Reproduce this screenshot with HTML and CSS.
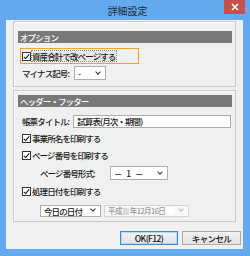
FILE: index.html
```html
<!DOCTYPE html>
<html lang="ja">
<head>
<meta charset="utf-8">
<link rel="stylesheet" href="styles.css">
</head>
<body>
<div class="window">
  <div class="titlebar">
    <span class="title">詳細設定</span>
    <span class="close"><svg width="8" height="8" viewBox="0 0 8 8"><path d="M1 1L7 7M7 1L1 7" stroke="#fff" stroke-width="1.7"/></svg></span>
  </div>
  <div class="client">
    <section class="panel p1">
      <div class="head">オプション</div>
      <label class="check focus"><span class="box on"></span><span class="ctext dotted">資産合計で改ページする</span></label>
      <div class="row r-minus">
        <span class="lbl">マイナス記号:</span>
        <span class="select s-minus"><span class="val">-</span><span class="chev"></span></span>
      </div>
    </section>
    <section class="panel p2">
      <div class="head">ヘッダー・フッター</div>
      <div class="row r-title">
        <span class="lbl">帳票タイトル:</span>
        <span class="input">試算表(月次・期間)</span>
      </div>
      <label class="check r-cb1"><span class="box on"></span><span class="ctext">事業所名を印刷する</span></label>
      <label class="check r-cb2"><span class="box on"></span><span class="ctext">ページ番号を印刷する</span></label>
      <div class="row r-fmt">
        <span class="lbl fmt-lbl">ページ番号形式:</span>
        <span class="select s-fmt"><span class="val">－&nbsp;&nbsp;1&nbsp;&nbsp;－</span><span class="chev"></span></span>
      </div>
      <label class="check r-cb3"><span class="box on"></span><span class="ctext">処理日付を印刷する</span></label>
      <div class="row r-date">
        <span class="select s-day"><span class="val">今日の日付</span><span class="chev"></span></span>
        <span class="select s-date dis"><span class="val">平成<span class="blot"></span>年12月16日</span><span class="blank"></span><span class="chev"></span></span>
      </div>
    </section>
    <div class="buttons">
      <button class="btn default">OK(F12)</button>
      <button class="btn">キャンセル</button>
    </div>
  </div>
</div>
</body>
</html>
```

FILE: styles.css
```css
* { box-sizing: border-box; }
html, body { margin: 0; padding: 0; }
body {
  width: 250px;
  height: 256px;
  overflow: hidden;
  font-family: "Noto Sans CJK JP", "Noto Sans", sans-serif;
  font-size: 8.5px;
  font-weight: 500;
  color: #1a1a1a;
}
.window {
  width: 250px;
  height: 256px;
  background: #62a9ee;
  padding: 0 7px 7px 6px;
  display: flex;
  flex-direction: column;
}
.titlebar {
  position: relative;
  height: 20px;
  flex: none;
  display: flex;
  align-items: center;
  justify-content: center;
}
.title {
  font-size: 10px;
  font-weight: 400;
  letter-spacing: -0.1px;
  color: #1d2a3a;
  margin-left: 6px;
  margin-top: 1px;
}
.close {
  position: absolute;
  top: 0;
  right: -2px;
  width: 21px;
  height: 14px;
  background: #c74f50;
  display: flex;
  align-items: center;
  justify-content: center;
}
.client {
  flex: 1;
  background: #f0f0f0;
  padding: 1px 7px 0 7px;
  display: flex;
  flex-direction: column;
}
.panel {
  border: 1px solid #c9c9c9;
  box-shadow: inset 1px 1px 0 #ffffff;
  display: flex;
  flex-direction: column;
  padding: 0 3px 0 4px;
}
.p1 { padding-top: 9px; padding-bottom: 6px; }
.p2 { margin-top: 3px; padding-top: 4px; padding-bottom: 4px; }
.head {
  height: 12px;
  background: #787878;
  color: #fff;
  letter-spacing: -0.9px;
  padding-left: 2px;
  line-height: 12px;
  flex: none;
}
.check {
  display: flex;
  align-items: center;
  height: 14px;
  padding-left: 4px;
  letter-spacing: -0.9px;
}
.box {
  width: 9px;
  height: 9px;
  border: 1px solid #333;
  background: #fff;
  margin-right: 1px;
  position: relative;
  flex: none;
}
.box.on::after {
  content: "";
  position: absolute;
  left: 2px;
  top: 0px;
  width: 2px;
  height: 5px;
  border: solid #111;
  border-width: 0 1.5px 1.5px 0;
  transform: rotate(40deg);
}
.focus {
  margin-top: 5px;
  margin-left: 2px;
  width: 119px;
  height: 16px;
  border: 1.5px solid #f0a42e;
  padding-left: 1px;
}
.dotted {
  outline: 1px dotted #888;
  outline-offset: 0;
  background: #e8e8e8;
  line-height: 10px;
  padding-right: 1px;
}
.row {
  display: flex;
  align-items: center;
  height: 14px;
  letter-spacing: -0.9px;
}
.lbl { padding-left: 4px; flex: none; }
.r-minus { margin-top: 2px; }
.select {
  display: flex;
  align-items: center;
  height: 14px;
  background: #fff;
  border: 1px solid #acacac;
  padding-left: 3px;
  position: relative;
  flex: none;
}
.val { flex: 1; white-space: nowrap; }
.chev {
  width: 4px;
  height: 4px;
  border: solid #333;
  border-width: 0 1.2px 1.2px 0;
  transform: rotate(45deg);
  margin: 0 5px 3px 4px;
  flex: none;
}
.s-minus { margin-left: 5px; width: 32px; }
.r-title { margin-top: 7px; }
.input {
  margin-left: 4px;
  flex: 1;
  margin-right: 1px;
  height: 13px;
  background: #fff;
  border: 1px solid #acacac;
  display: flex;
  align-items: center;
  padding-left: 3px;
}
.r-cb1 { margin-top: 3px; }
.r-cb2 { margin-top: 3px; }
.r-fmt { margin-top: 4px; }
.fmt-lbl { padding-left: 22px; width: 92px; }
.s-fmt { width: 58px; letter-spacing: 0; }
.r-cb3 { margin-top: 4px; }
.r-date { margin-top: 6px; height: 13px; padding-left: 22px; gap: 3px; }
.r-date .select { height: 12px; }
.s-day { width: 61px; }
.s-date {
  width: 85px;
  background: #f7f7f7;
  border-color: #d5d5d5;
  color: #9a9a9a;
  letter-spacing: -0.6px;
  font-size: 7.5px;
}
.s-date .val { flex: none; }
.blank { flex: 1; height: 8px; background: #fdfdfd; margin-left: 2px; }
.s-date .chev { border-color: #bbb; }
.blot { display: inline-block; width: 6px; height: 7px; background: #d9d9d9; vertical-align: middle; margin: 0 1px; }
.buttons {
  margin-top: 9px;
  display: flex;
  justify-content: flex-end;
  gap: 4px;
  margin-right: -5px;
}
.btn {
  height: 14px;
  width: 59px;
  font-family: inherit;
  font-size: 8.5px;
  font-weight: 500;
  letter-spacing: -0.6px;
  color: #111;
  background: linear-gradient(#f2f2f2, #e3e3e3);
  border: 1px solid #acacac;
  padding: 0;
  line-height: 12px;
}
.btn.default {
  width: 58px;
  border-color: #3c8ad8;
  box-shadow: inset 0 0 0 1px #b8d8f6;
}
```
